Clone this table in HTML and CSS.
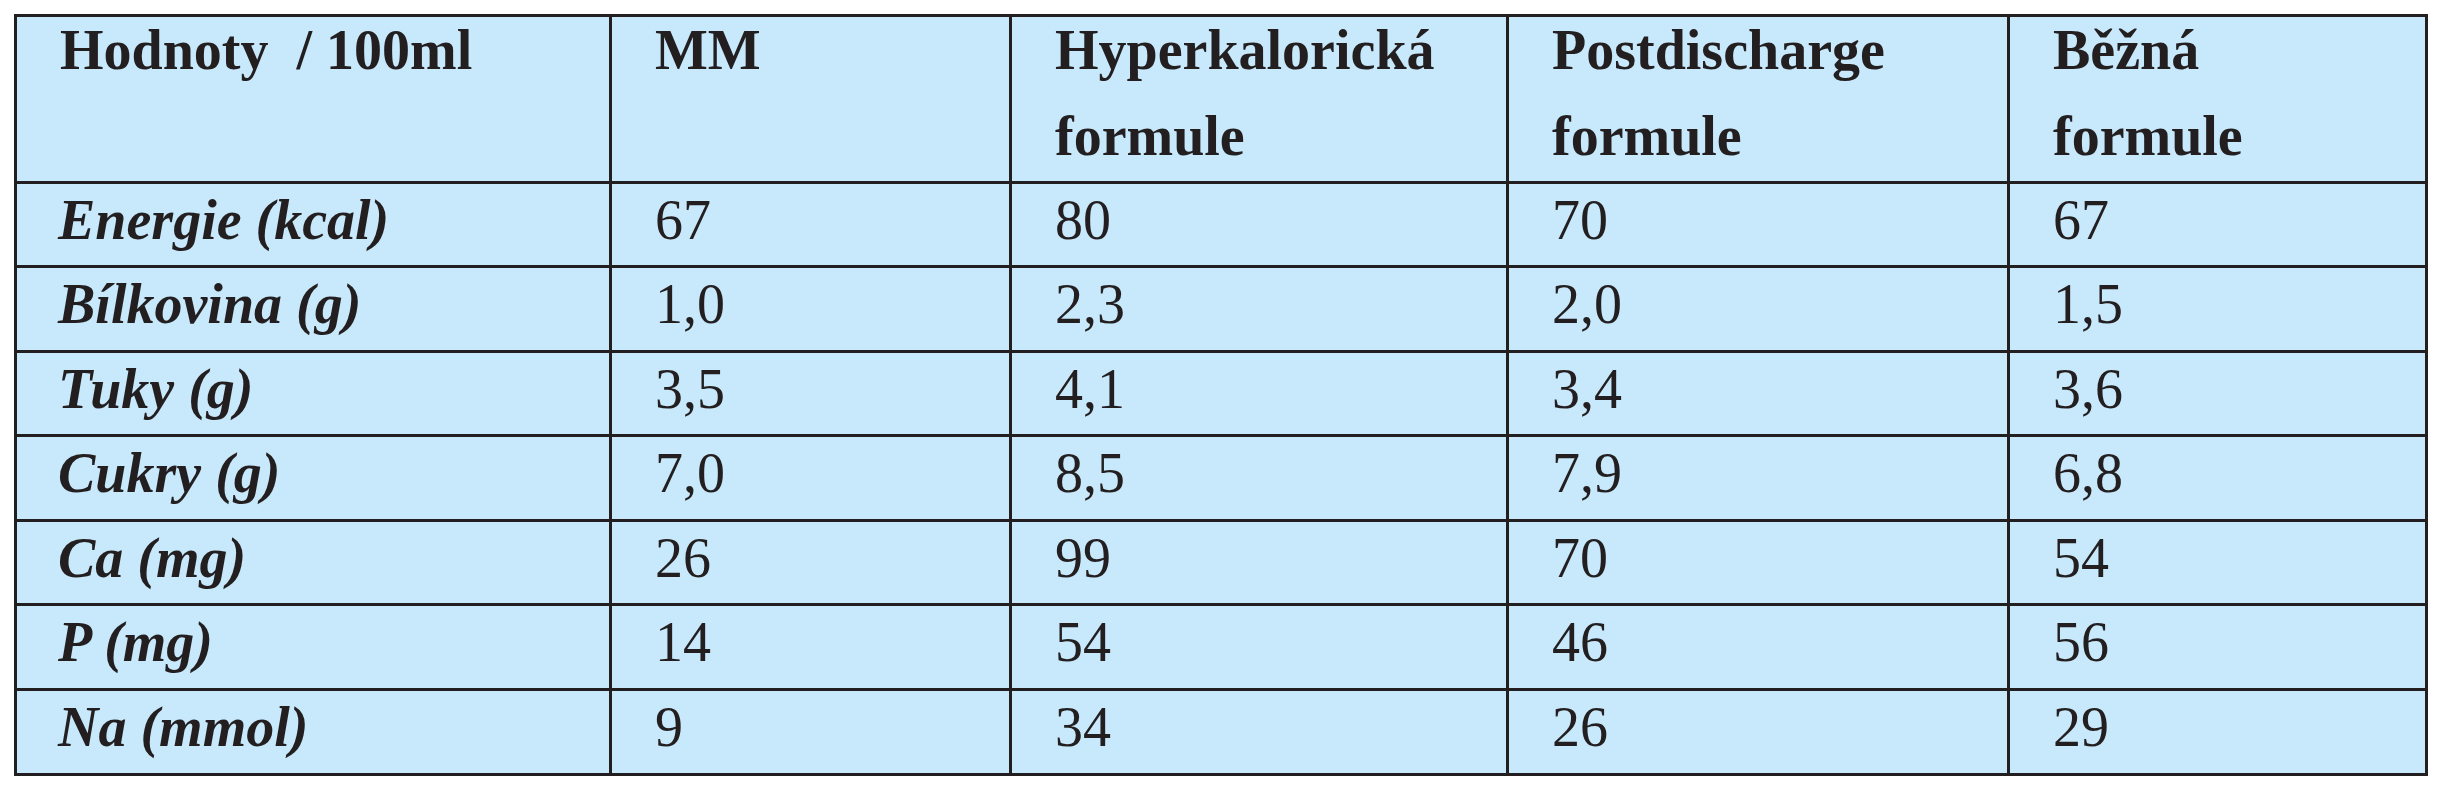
FILE: index.html
```html
<!DOCTYPE html>
<html lang="cs">
<head>
<meta charset="utf-8">
<title>Hodnoty / 100ml</title>
<link rel="stylesheet" href="styles.css">
</head>
<body>
<div class="page">
  <div class="grid" role="table">
    <div class="cell head"><div class="txt">Hodnoty&nbsp; / 100ml</div></div>
    <div class="cell head"><div class="txt">MM</div></div>
    <div class="cell head"><div class="txt">Hyperkalorická<br>formule</div></div>
    <div class="cell head"><div class="txt">Postdischarge<br>formule</div></div>
    <div class="cell head"><div class="txt">Běžná<br>formule</div></div>

    <div class="cell label">Energie (kcal)</div>
    <div class="cell">67</div><div class="cell">80</div><div class="cell">70</div><div class="cell">67</div>

    <div class="cell label">Bílkovina (g)</div>
    <div class="cell">1,0</div><div class="cell">2,3</div><div class="cell">2,0</div><div class="cell">1,5</div>

    <div class="cell label">Tuky (g)</div>
    <div class="cell">3,5</div><div class="cell">4,1</div><div class="cell">3,4</div><div class="cell">3,6</div>

    <div class="cell label">Cukry (g)</div>
    <div class="cell">7,0</div><div class="cell">8,5</div><div class="cell">7,9</div><div class="cell">6,8</div>

    <div class="cell label">Ca (mg)</div>
    <div class="cell">26</div><div class="cell">99</div><div class="cell">70</div><div class="cell">54</div>

    <div class="cell label">P (mg)</div>
    <div class="cell">14</div><div class="cell">54</div><div class="cell">46</div><div class="cell">56</div>

    <div class="cell label">Na (mmol)</div>
    <div class="cell">9</div><div class="cell">34</div><div class="cell">26</div><div class="cell">29</div>
  </div>
</div>
</body>
</html>
```
FILE: styles.css
```css
html, body {
  margin: 0;
  padding: 0;
  background: #ffffff;
}

.page {
  padding: 14px;
}

.grid {
  display: grid;
  width: 2408px;
  grid-template-columns: 592px 397px 494px 498px 415px;
  grid-template-rows: 164px 81px 82px 81px 82px 81px 82px 82px;
  gap: 3px;
  padding: 3px;
  background: #231f20;
  font-family: "Liberation Serif", "Times New Roman", serif;
  font-size: 56px;
  color: #231f20;
}

.cell {
  background: #c7e9fb;
  padding: 5px 0 0 43px;
  line-height: 62px;
  white-space: nowrap;
  overflow: hidden;
}

.head {
  padding-top: 0;
  font-weight: bold;
  line-height: 86px;
}

.head .txt {
  margin-top: -10px;
}

.label {
  padding-left: 41px;
  font-weight: bold;
  font-style: italic;
}
```
